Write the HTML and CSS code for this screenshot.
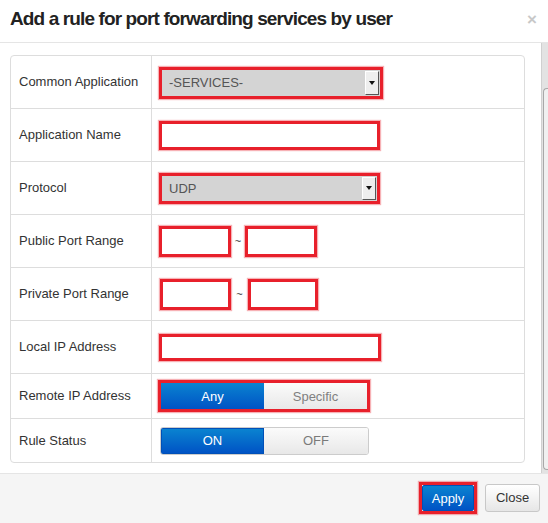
FILE: index.html
```html
<!DOCTYPE html>
<html>
<head>
<meta charset="utf-8">
<link rel="stylesheet" href="styles.css">
</head>
<body>
<div class="modal">
  <div class="modal-header">
    <h3 class="title">Add a rule for port forwarding services by user</h3>
    <span class="close-x">×</span>
  </div>
  <div class="modal-body">
    <div class="content">
      <table class="grid">
        <tr class="tall first">
          <td class="label">Common Application</td>
          <td class="field">
            <div class="hl sel-wrap wide-sel">
              <div class="select"><span>-SERVICES-</span><span class="arrow"><i></i></span></div>
            </div>
          </td>
        </tr>
        <tr class="tall">
          <td class="label">Application Name</td>
          <td class="field"><div class="hl text wide"></div></td>
        </tr>
        <tr class="tall">
          <td class="label">Protocol</td>
          <td class="field">
            <div class="hl sel-wrap proto-sel">
              <div class="select"><span>UDP</span><span class="arrow"><i></i></span></div>
            </div>
          </td>
        </tr>
        <tr class="tall">
          <td class="label">Public Port Range</td>
          <td class="field">
            <div class="range">
              <div class="hl text port"></div><span class="tilde">~</span><div class="hl text port"></div>
            </div>
          </td>
        </tr>
        <tr class="tall">
          <td class="label">Private Port Range</td>
          <td class="field">
            <div class="range range2">
              <div class="hl text port"></div><span class="tilde">~</span><div class="hl text port"></div>
            </div>
          </td>
        </tr>
        <tr class="tall">
          <td class="label">Local IP Address</td>
          <td class="field"><div class="hl text wide ip"></div></td>
        </tr>
        <tr class="short">
          <td class="label">Remote IP Address</td>
          <td class="field">
            <div class="hl seg-wrap">
              <div class="seg"><span class="on">Any</span><span class="off">Specific</span></div>
            </div>
          </td>
        </tr>
        <tr class="short last">
          <td class="label">Rule Status</td>
          <td class="field">
            <div class="seg seg-plain"><span class="on">ON</span><span class="off">OFF</span></div>
          </td>
        </tr>
      </table>
    </div>
    <div class="scrollbar"><div class="thumb"></div></div>
  </div>
  <div class="modal-footer">
    <div class="hl apply-wrap"><button class="btn btn-primary">Apply</button></div>
    <button class="btn btn-default">Close</button>
  </div>
</div>
</body>
</html>
```

FILE: styles.css
```css
* { box-sizing: border-box; }
html, body { margin: 0; padding: 0; background: #fff; }
body {
  font-family: "Liberation Sans", Arial, sans-serif;
  font-size: 13px;
  color: #333;
  width: 548px;
  height: 523px;
  overflow: hidden;
}
.modal { width: 548px; height: 523px; display: flex; flex-direction: column; }
.modal-header {
  height: 43px;
  border-bottom: 1px solid #e5e5e5;
  display: flex;
  align-items: center;
  justify-content: space-between;
  padding: 0 11px 4px 10px;
}
.title {
  margin: 0;
  font-size: 19px;
  font-weight: bold;
  color: #222;
  letter-spacing: -0.88px;
}
.close-x {
  font-size: 17px;
  font-weight: bold;
  color: #c8c8c8;
  line-height: 1;
  margin-top: 0;
}
.modal-body { display: flex; height: 430px; }
.content { flex: 1; padding: 12px 15px 0 10px; }
.scrollbar {
  width: 7px;
  background: #e3e3e3;
  border-left: 1px solid #d0d0d0;
  padding-top: 45px;
  padding-bottom: 3px;
}
.thumb {
  height: 100%;
  margin-left: 1px;
  border: 1px solid #a8a8a8;
  border-right: none;
  border-radius: 4px 0 0 4px;
  background: #f0f0f0;
}
.grid {
  width: 515px;
  border: 1px solid #ddd;
  border-radius: 4px;
  border-collapse: separate;
  border-spacing: 0;
}
.grid td { border-top: 1px solid #ddd; padding: 0; vertical-align: middle; }
.grid tr.first td { border-top: none; }
.grid td.label { width: 141px; padding-left: 8px; padding-bottom: 1px; border-right: 1px solid #ddd; color: #333; }
.grid td.field { padding-left: 7px; }
.tall td { height: 53px; }
.tall.first td { height: 52px; }
.short td { height: 45px; }
.short.last td { height: 44px; }

.hl { border: 3px solid #e8202b; box-shadow: 0 0 1px 1px rgba(232,32,43,0.35); }

.sel-wrap { display: block; }
.wide-sel { width: 224px; height: 32px; margin-top: 1px; }
.proto-sel { width: 221px; height: 31px; }
.select {
  height: 100%;
  background: #d4d4d4;
  display: flex;
  align-items: center;
  justify-content: space-between;
  padding-left: 7px;
  color: #555;
  font-size: 13px;
}
.arrow {
  width: 14px;
  height: calc(100% - 2px);
  margin-right: 1px;
  background: #eeeeee;
  border-left: 1px solid #fff;
  border-top: 1px solid #fff;
  border-right: 1px solid #555;
  border-bottom: 1px solid #555;
  display: flex;
  align-items: center;
  justify-content: center;
}
.arrow i {
  width: 0; height: 0;
  border-left: 3px solid transparent;
  border-right: 3px solid transparent;
  border-top: 4px solid #111;
}
.text { background: #fff; height: 29px; }
.wide { width: 221px; }
.ip { width: 222px; height: 27px; }
.range { display: flex; align-items: center; }
.port { width: 72px; height: 31px; }
.tilde { width: 14px; text-align: center; font-size: 11px; color: #333; }
.range2 .tilde { width: 17px; }
.range2 .port:first-child { width: 71px; margin-left: 1px; }
.range2 .port:last-child { width: 70px; }

.seg-wrap { width: 212px; height: 32px; margin-left: -1px; }
.seg { display: flex; height: 100%; }
.seg span {
  flex: 1;
  display: flex;
  align-items: center;
  justify-content: center;
  font-size: 13px;
}
.seg .on {
  background: linear-gradient(#0a83d0, #0053c5);
  color: #fff;
}
.seg .off {
  background: linear-gradient(#fbfbfb, #e8e8e8);
  color: #808080;
}
.seg-plain {
  width: 209px;
  height: 28px;
  margin-left: 1px;
  border-radius: 3px;
  overflow: hidden;
  border: 1px solid #ccc;
}
.seg-plain .on { flex: 0 0 103px; border: 1px solid #0050b8; }
.seg-plain .off { color: #7a7a7a; }

.modal-footer {
  flex: 1;
  border-top: 1px solid #e5e5e5;
  background: #f5f5f5;
  display: flex;
  align-items: center;
  justify-content: flex-end;
  padding: 0 8px 2px 0;
  gap: 8px;
}
.btn {
  font-family: "Liberation Sans", Arial, sans-serif;
  font-size: 13px;
  border-radius: 3px;
  padding: 0;
  height: 28px;
}
.apply-wrap { width: 58px; height: 32px; margin-top: 1px; }
.btn-primary {
  width: 100%;
  height: 100%;
  border: 1px solid #0050b8;
  border-radius: 2px;
  background: linear-gradient(#0a83d0, #0053c5);
  color: #fff;
}
.btn-default {
  width: 55px;
  border: 1px solid #c8c8c8;
  background: linear-gradient(#ffffff, #e6e6e6);
  color: #333;
}
```
